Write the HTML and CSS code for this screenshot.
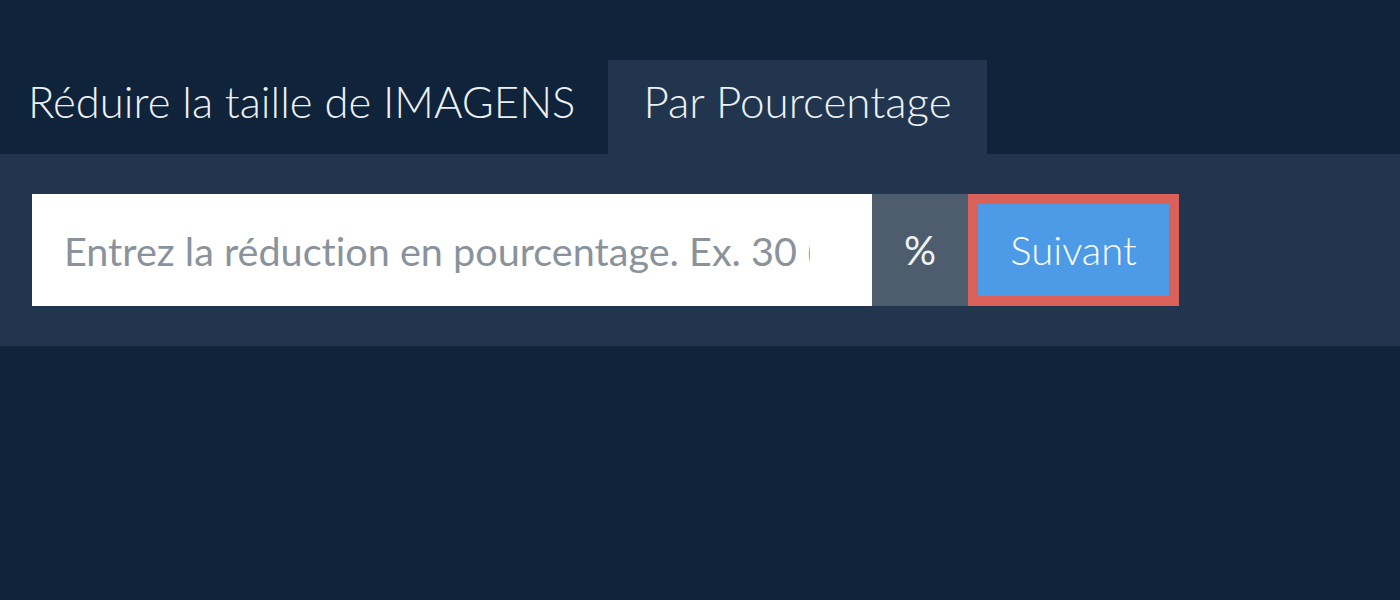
FILE: index.html
```html
<!DOCTYPE html>
<html lang="fr">
<head>
<meta charset="utf-8">
<title>Réduire la taille de IMAGENS</title>
<link rel="stylesheet" href="styles.css">
</head>
<body>
  <div class="page">
    <nav class="tabs">
      <div class="tab tab-title">Réduire la taille de IMAGENS</div>
      <div class="tab tab-active">Par Pourcentage</div>
    </nav>
    <section class="panel">
      <form class="row">
        <input class="field" type="text" placeholder="Entrez la réduction en pourcentage. Ex. 30 (pour 30%)">
        <span class="unit">%</span>
        <button class="next" type="button">Suivant</button>
      </form>
    </section>
  </div>
</body>
</html>
```
FILE: styles.css
```css
html, body {
  margin: 0;
  padding: 0;
  height: 100%;
}
body {
  background: #0f243a;
  font-family: Lato, "Open Sans", sans-serif;
  color: #f2f4f6;
  font-variant-ligatures: none;
}
.page {
  padding-top: 60px;
}
.tabs {
  display: flex;
  height: 94px;
}
.tab {
  display: flex;
  align-items: center;
  box-sizing: border-box;
  padding: 0 35px 12px;
  font-size: 44px;
  font-weight: 300;
  color: #eef1f4;
}
.tab-title {
  padding-left: 28px;
  padding-right: 33px;
  font-size: 43.6px;
}
.tab-active {
  background: #21364e;
}
.panel {
  background: #21364e;
  padding: 40px 32px;
}
.row {
  display: flex;
  margin: 0;
}
.field {
  width: 840px;
  height: 112px;
  box-sizing: border-box;
  border: 0;
  outline: none;
  background: #fff;
  padding: 0 62.5px 0 32px;
  font-family: Lato, sans-serif;
  font-size: 39.6px;
  font-variant-ligatures: none;
  color: #333;
}
.field::placeholder {
  color: #8a939c;
  opacity: 1;
}
.unit {
  width: 96px;
  display: flex;
  align-items: center;
  justify-content: center;
  background: #4d5d6d;
  color: #eef1f4;
  font-size: 40px;
}
.next {
  width: 211px;
  height: 112px;
  box-sizing: border-box;
  border: 10px solid #da605a;
  background: #4d9be6;
  color: #fff;
  font-family: Lato, sans-serif;
  font-size: 40px;
  font-weight: 300;
  padding: 0;
  cursor: pointer;
}
```
